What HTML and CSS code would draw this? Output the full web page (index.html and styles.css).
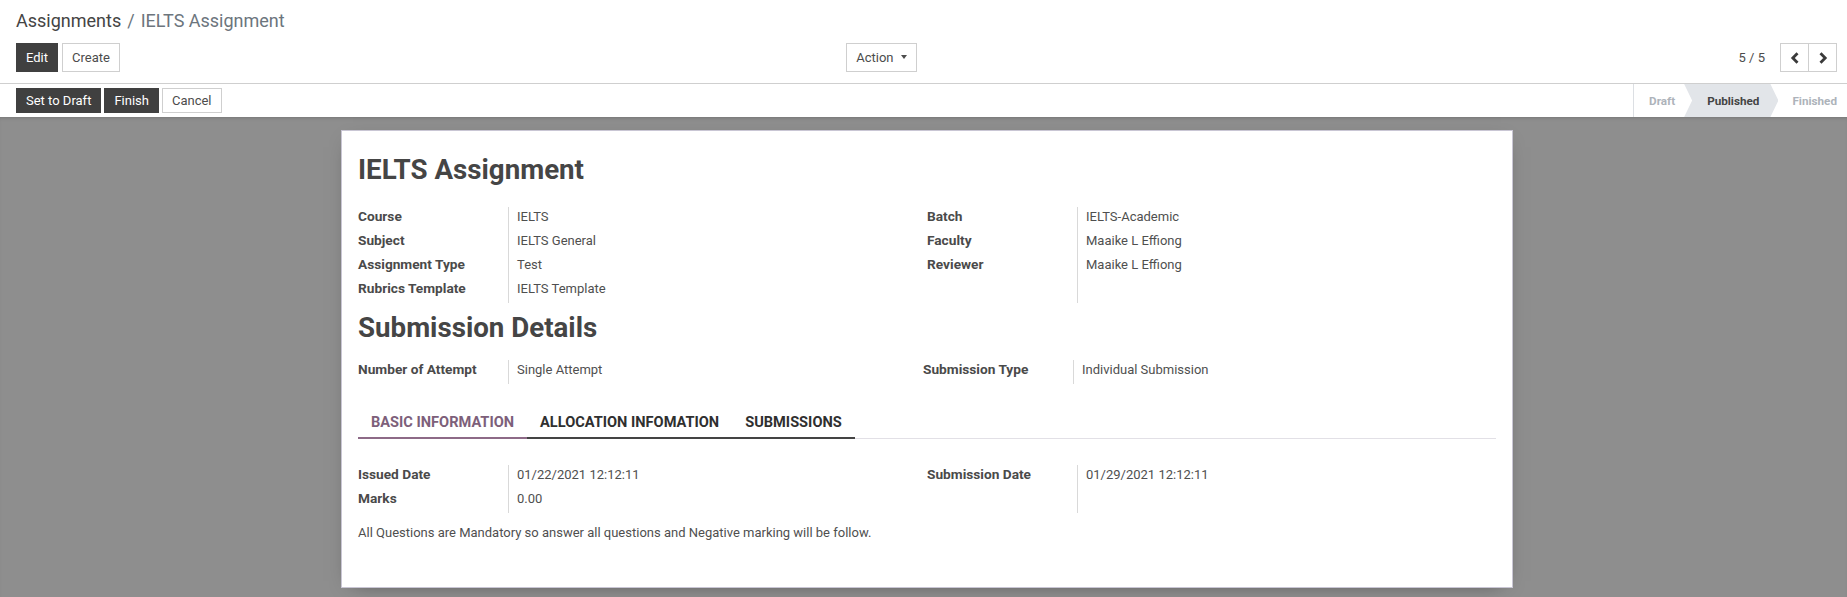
FILE: index.html
```html
<!DOCTYPE html>
<html lang="en">
<head>
<meta charset="utf-8">
<title>IELTS Assignment</title>
<link rel="stylesheet" href="styles.css">
</head>
<body>
<header class="cp">
  <nav class="crumbs">
    <span class="crumb-link">Assignments</span><span class="crumb-sep">/</span><span class="crumb-active">IELTS Assignment</span>
  </nav>
  <div class="cp-bottom">
    <div class="cp-left">
      <div class="btn-row">
        <button class="btn btn-dark">Edit</button>
        <button class="btn btn-light">Create</button>
      </div>
      <button class="btn btn-light btn-action">Action<span class="caret"></span></button>
    </div>
    <div class="cp-right">
      <span class="pager-value">5 / 5</span>
      <div class="pager-btns">
        <button class="pbtn" aria-label="Previous"><svg width="10" height="12" viewBox="0 0 10 12"><polyline points="7.5,1.2 2.8,6 7.5,10.8" fill="none" stroke="#3a3a3a" stroke-width="2.8"/></svg></button>
        <button class="pbtn" aria-label="Next"><svg width="10" height="12" viewBox="0 0 10 12"><polyline points="2.5,1.2 7.2,6 2.5,10.8" fill="none" stroke="#3a3a3a" stroke-width="2.8"/></svg></button>
      </div>
    </div>
  </div>
</header>

<div class="statusbar">
  <div class="sb-buttons">
    <button class="btn btn-sm btn-dark">Set to Draft</button>
    <button class="btn btn-sm btn-dark">Finish</button>
    <button class="btn btn-sm btn-light">Cancel</button>
  </div>
  <div class="sb-status">
    <span class="st st-draft">Draft</span>
    <span class="st st-current">Published</span>
    <span class="st st-last">Finished</span>
  </div>
</div>

<main class="content">
  <div class="sheet">
    <h1 class="title">IELTS Assignment</h1>

    <div class="groups groups-main">
      <div class="group">
        <div class="labels">
          <div class="row">Course</div>
          <div class="row">Subject</div>
          <div class="row">Assignment Type</div>
          <div class="row">Rubrics Template</div>
        </div>
        <div class="values">
          <div class="row">IELTS</div>
          <div class="row">IELTS General</div>
          <div class="row">Test</div>
          <div class="row">IELTS Template</div>
        </div>
      </div>
      <div class="group">
        <div class="labels">
          <div class="row">Batch</div>
          <div class="row">Faculty</div>
          <div class="row">Reviewer</div>
        </div>
        <div class="values">
          <div class="row">IELTS-Academic</div>
          <div class="row">Maaike L Effiong</div>
          <div class="row">Maaike L Effiong</div>
        </div>
      </div>
    </div>

    <h2 class="title title-sub">Submission Details</h2>

    <div class="groups groups-sub">
      <div class="group">
        <div class="labels"><div class="row">Number of Attempt</div></div>
        <div class="values"><div class="row">Single Attempt</div></div>
      </div>
      <div class="group">
        <div class="labels"><div class="row">Submission Type</div></div>
        <div class="values"><div class="row">Individual Submission</div></div>
      </div>
    </div>

    <div class="tabs">
      <span class="tab tab-active">BASIC INFORMATION</span>
      <span class="tab tab-dark">ALLOCATION INFOMATION</span>
      <span class="tab tab-dark">SUBMISSIONS</span>
    </div>

    <div class="groups groups-tab">
      <div class="group">
        <div class="labels">
          <div class="row">Issued Date</div>
          <div class="row">Marks</div>
        </div>
        <div class="values">
          <div class="row">01/22/2021 12:12:11</div>
          <div class="row">0.00</div>
        </div>
      </div>
      <div class="group">
        <div class="labels"><div class="row">Submission Date</div></div>
        <div class="values"><div class="row">01/29/2021 12:12:11</div></div>
      </div>
    </div>

    <p class="note">All Questions are Mandatory so answer all questions and Negative marking will be follow.</p>
  </div>
</main>
</body>
</html>
```

FILE: styles.css
```css
* { box-sizing: border-box; }

html, body {
  margin: 0;
  height: 100%;
}

body {
  font-family: Roboto, "Noto Sans", "Liberation Sans", sans-serif;
  font-size: 13px;
  color: #4c4c4c;
  background: #8e8e8e;
  display: flex;
  flex-direction: column;
}

/* ---------- control panel ---------- */
.cp {
  background: #fff;
  padding: 7px 10px 0 16px;
  border-bottom: 1px solid #cfcfcf;
}

.crumbs {
  font-size: 18px;
  line-height: 27px;
  height: 27px;
  white-space: nowrap;
}
.crumb-link { color: #444; }
.crumb-sep { color: #6c757d; padding: 0 6px; }
.crumb-active { color: #6c757d; }

.cp-bottom {
  display: grid;
  grid-template-columns: 1fr 1fr;
  margin-top: 9px;
  padding-bottom: 11px;
}

.cp-left {
  display: flex;
  justify-content: space-between;
  align-items: center;
  padding-right: 10px;
}

.btn-row {
  display: flex;
  gap: 4px;
}

.btn {
  font-family: inherit;
  font-size: 13px;
  line-height: 19px;
  padding: 4px 9px;
  border: 1px solid transparent;
  border-radius: 0;
  cursor: pointer;
  white-space: nowrap;
}
.btn-dark {
  background: #404040;
  border-color: #404040;
  color: #fff;
}
.btn-light {
  background: #fff;
  border-color: #cfcfcf;
  color: #4c4c4c;
}
.btn-sm {
  padding: 2px 9px;
}

.btn-action {
  display: flex;
  align-items: center;
}
.caret {
  display: inline-block;
  margin-left: 7px;
  border-top: 4px solid #4c4c4c;
  border-left: 3.8px solid transparent;
  border-right: 3.8px solid transparent;
  margin-top: -2px;
}

.cp-right {
  display: flex;
  justify-content: flex-end;
  align-items: center;
}
.pager-value {
  margin-right: 15px;
  color: #4c4c4c;
}
.pager-btns {
  display: flex;
}
.pbtn {
  width: 29px;
  height: 29px;
  padding: 0;
  background: #fff;
  border: 1px solid #cfcfcf;
  display: flex;
  align-items: center;
  justify-content: center;
  cursor: pointer;
}
.pbtn + .pbtn { margin-left: -1px; }

/* ---------- status bar ---------- */
.statusbar {
  background: #fff;
  height: 33px;
  display: flex;
  justify-content: space-between;
  padding-left: 16px;
}
.sb-buttons {
  display: flex;
  align-items: center;
  gap: 3px;
}
.sb-status {
  display: flex;
  align-items: stretch;
  border-left: 1px solid #dcdfe3;
  padding-right: 10px;
}
.st {
  display: flex;
  align-items: center;
  font-size: 11.7px;
  font-weight: 700;
  color: #adb3ba;
}
.st-draft { padding: 0 9px 0 15px; }
.st-current {
  color: #444;
  background: #e2e5e9;
  padding: 0 19px 0 23px;
  clip-path: polygon(0 0, calc(100% - 8px) 0, 100% 50%, calc(100% - 8px) 100%, 0 100%, 8px 50%);
}
.st-last { padding-left: 14px; }

/* ---------- sheet ---------- */
.content {
  flex: 1;
  box-shadow: inset 0 3px 4px -3px rgba(0,0,0,0.25);
}

.sheet {
  width: 1172px;
  margin: 13px 0 0 341px;
  background: #fff;
  border: 1px solid #c9c6d4;
  box-shadow: 0 5px 20px -12px rgba(0,0,0,0.6);
  padding: 23px 16px 44px;
}

.title {
  margin: 0;
  font-size: 27.7px;
  line-height: 32px;
  font-weight: 700;
  color: #454545;
}
.title-sub { margin-top: 9px; }

.groups {
  display: grid;
  grid-template-columns: 569px 1fr;
}
.groups-main { margin-top: 21px; }
.groups-sub { margin-top: 16px; grid-template-columns: 565px 1fr; }
.groups-tab { margin-top: 26px; }

.group {
  display: flex;
}
.labels {
  width: 150px;
  font-size: 13.7px;
  font-weight: 700;
  color: #4a4a4a;
}
.values {
  flex: 1;
  border-left: 1px solid #d9d9d9;
  padding-left: 8px;
  color: #4f4f4f;
}
.row {
  height: 24px;
  line-height: 19.5px;
  white-space: nowrap;
}

/* ---------- tabs ---------- */
.tabs {
  display: flex;
  margin-top: 20px;
  border-bottom: 1px solid #e2e0e6;
}
.tab {
  font-size: 14.6px;
  line-height: 20px;
  font-weight: 700;
  padding: 8px 13px 5px;
  margin-bottom: -1px;
  border-bottom: 2px solid transparent;
  white-space: nowrap;
}
.tab-active {
  color: #7d5f7a;
  border-bottom-color: #8d6a87;
}
.tab-dark {
  color: #2f2f2f;
  border-bottom-color: #444;
}

.note {
  margin: 10px 0 0;
  line-height: 19.5px;
  color: #4f4f4f;
}
```
